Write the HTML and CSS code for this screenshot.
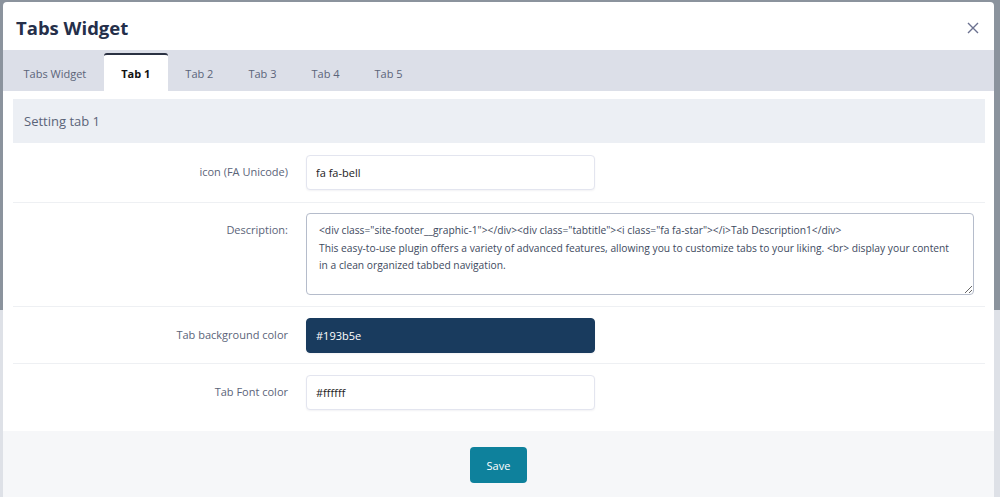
FILE: index.html
```html
<!DOCTYPE html>
<html lang="en">
<head>
<meta charset="UTF-8">
<meta name="viewport" content="width=device-width, initial-scale=1.0">
<title>Tabs Widget</title>
<link rel="stylesheet" href="styles.css">
</head>
<body>

<div class="modal">
  <div class="modal-header">
    <h1>Tabs Widget</h1>
    <button type="button" class="close-btn" aria-label="Close">
      <svg width="12" height="12" viewBox="0 0 12 12"><path d="M1 1L11 11M11 1L1 11" stroke="#6b7190" stroke-width="1.4" fill="none"/></svg>
    </button>
  </div>

  <!-- tabs -->
  <ul class="tab-bar">
    <li class="tab">Tabs Widget</li>
    <li class="tab active">Tab 1</li>
    <li class="tab">Tab 2</li>
    <li class="tab">Tab 3</li>
    <li class="tab">Tab 4</li>
    <li class="tab">Tab 5</li>
  </ul>

  <div class="modal-body">
    <div class="section-title">Setting tab 1</div>

    <div class="form-row first">
      <label for="icon">icon (FA Unicode)</label>
      <div class="field"><input type="text" id="icon" class="input" value="fa fa-bell"></div>
    </div>

    <div class="form-row tall">
      <label for="desc">Description:</label>
      <div class="field"><textarea id="desc" class="textarea">&lt;div class="site-footer__graphic-1"&gt;&lt;/div&gt;&lt;div class="tabtitle"&gt;&lt;i class="fa fa-star"&gt;&lt;/i&gt;Tab Description1&lt;/div&gt;
This easy-to-use plugin offers a variety of advanced features, allowing you to customize tabs to your liking. &lt;br&gt; display your content in a clean organized tabbed navigation.</textarea></div>
    </div>

    <div class="form-row">
      <label for="bg">Tab background color</label>
      <div class="field"><input type="text" id="bg" class="input dark" value="#193b5e"></div>
    </div>

    <div class="form-row last">
      <label for="fg">Tab Font color</label>
      <div class="field"><input type="text" id="fg" class="input" value="#ffffff"></div>
    </div>
  </div>

  <div class="modal-footer">
    <button type="button" class="save-btn">Save</button>
  </div>
</div>

</body>
</html>
```

FILE: styles.css
```css
body {
  margin: 0;
  height: 497px;
  overflow: hidden;
  font-family: "Open Sans", "Noto Sans", Arial, sans-serif;
  color: #3e4a5e;
  background: linear-gradient(180deg, #8b939d 0, #8b939d 310px, #dee1e7 310px, #dee1e7 100%);
}

.modal {
  margin: 2px 6px 0 3px;
  background: #fff;
  border-radius: 4px 4px 0 0;
  height: 520px;
  display: flex;
  flex-direction: column;
}

.modal-header {
  height: 48px;
  display: flex;
  align-items: center;
  justify-content: space-between;
  padding: 0 15px 0 13px;
}

.modal-header h1 {
  margin: 2px 0 0;
  font-size: 18.5px;
  font-weight: 700;
  color: #252f4a;
}

.close-btn {
  background: none;
  border: none;
  padding: 0;
  margin-top: 4px;
  cursor: pointer;
  display: flex;
}

.tab-bar {
  list-style: none;
  margin: 0;
  padding: 0 0 0 3px;
  height: 41px;
  background: #dcdfe8;
  display: flex;
  align-items: flex-end;
}

.tab {
  height: 38px;
  box-sizing: border-box;
  padding: 0 17.5px;
  display: flex;
  align-items: center;
  font-size: 11px;
  color: #5b6479;
  border-top: 2px solid transparent;
}

.tab.active {
  background: #fff;
  border-top-color: #2a3142;
  border-radius: 3px 3px 0 0;
  color: #111;
  font-weight: 700;
}

.modal-body {
  padding: 8px 9px 11px 10px;
}

.section-title {
  background: #eceff4;
  height: 44px;
  display: flex;
  align-items: center;
  padding-left: 11px;
  font-size: 13px;
  color: #5b6479;
}

.form-row {
  display: grid;
  grid-template-columns: 275px 1fr;
  gap: 18px;
  padding: 11px 0 10px;
  border-bottom: 1px solid #eef0f3;
}

.form-row.first {
  padding: 12px 0;
}

.form-row.tall {
  padding: 10px 0 11px;
}

.form-row.last {
  border-bottom: none;
}

.form-row label {
  text-align: right;
  font-size: 11px;
  color: #5b6479;
  padding-top: 9px;
}

.input {
  display: block;
  box-sizing: border-box;
  width: 289px;
  height: 35px;
  padding: 0 9px;
  border: 1px solid #e3e5ef;
  border-radius: 4px;
  box-shadow: 0 1px 2px rgba(30, 40, 80, 0.06);
  font-family: inherit;
  font-size: 11px;
  color: #222;
  background: #fff;
}

.input.dark {
  background: #193b5e;
  color: #fff;
  border-color: #193b5e;
}

.textarea {
  display: block;
  box-sizing: border-box;
  width: 668px;
  height: 82px;
  padding: 8px 20px 8px 12px;
  border: 1px solid #b5bccb;
  border-radius: 4px;
  font-family: inherit;
  font-size: 10.25px;
  line-height: 17.5px;
  color: #3e4a5e;
  resize: both;
}

.modal-footer {
  flex: 1;
  background: #f6f7f9;
  display: flex;
  justify-content: center;
  padding-top: 16px;
}

.save-btn {
  align-self: flex-start;
  width: 57px;
  height: 36px;
  background: #0e819c;
  color: #fff;
  border: none;
  border-radius: 4px;
  font-family: inherit;
  font-size: 11px;
  cursor: pointer;
}
```
